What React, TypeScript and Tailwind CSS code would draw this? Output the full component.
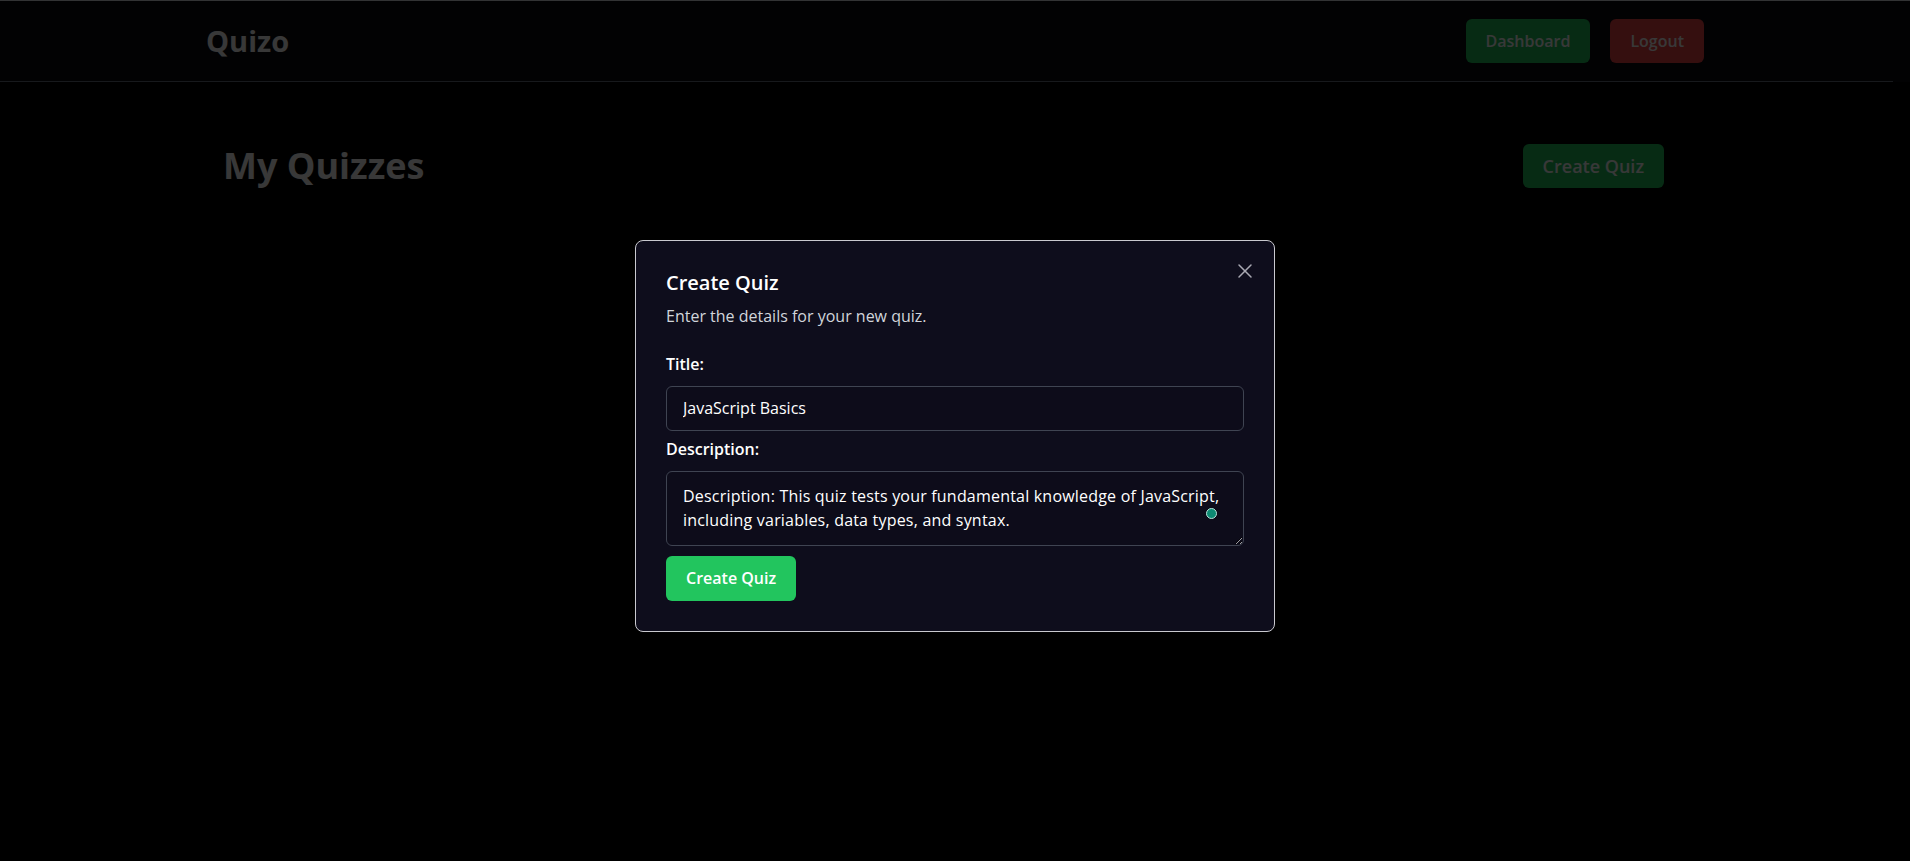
import { useEffect, useRef } from 'react'
import { X } from 'lucide-react'

const description =
  'Description: This quiz tests your fundamental knowledge of JavaScript, including variables, data types, and syntax.'

export default function App() {
  const descRef = useRef<HTMLTextAreaElement>(null)

  // put the caret at the end of the description, like the user just typed it
  useEffect(() => {
    const el = descRef.current
    if (el) {
      el.focus()
      el.setSelectionRange(el.value.length, el.value.length)
    }
  }, [])

  return (
    <div className="min-h-screen bg-black font-['Segoe_UI','Open_Sans',sans-serif] text-white">
      {/* Page underneath the dialog */}
      <div className="h-px w-full bg-[#e5e7eb]" />
      <nav className="bg-[#0a0a0f]">
        <div className="mx-auto flex h-20 w-[1498px] items-center justify-between">
          <span className="text-[29px] font-bold">Quizo</span>
          <div className="flex items-center gap-5">
            <button className="h-11 rounded-md bg-[#22c55e] px-5 text-base font-semibold">
              Dashboard
            </button>
            <button className="h-11 rounded-md bg-[#ef4444] px-5 text-base font-semibold">
              Logout
            </button>
          </div>
        </div>
        <div className="mr-[17px] h-px bg-[#6b7280]" />
      </nav>

      <main className="pl-[223px] pr-[246px] pt-[62px]">
        <div className="flex items-center justify-between">
          <h1 className="text-4xl font-bold">My Quizzes</h1>
          <button className="h-11 rounded-md bg-[#22c55e] px-5 text-lg font-semibold">
            Create Quiz
          </button>
        </div>
      </main>

      {/* Overlay + dialog */}
      <div className="fixed inset-0 flex items-center justify-center bg-black/[0.78] pt-[10px]">
        <div className="relative w-[640px] rounded-lg border border-[#c9c9cf] bg-[#0e0d1c] px-[30px] pb-[30px] pt-8">
          <button className="absolute right-[17px] top-[18px] text-[#a9a9b3]">
            <X size={24} strokeWidth={1.5} />
          </button>

          <h2 className="text-xl font-semibold leading-none">Create Quiz</h2>
          <p className="mt-[11px] text-base leading-6 text-[#d1d5db]">
            Enter the details for your new quiz.
          </p>

          <label className="mt-6 block text-base font-semibold leading-6">Title:</label>
          <input
            defaultValue="JavaScript Basics"
            className="mt-2.5 block h-[45px] w-full rounded-md border border-[#3f4452] bg-[#0d0c1a] px-4 text-base text-white outline-none"
          />

          <label className="mt-1.5 block text-base font-semibold leading-6">Description:</label>
          <div className="relative mt-2.5">
            <textarea
              ref={descRef}
              rows={2}
              defaultValue={description}
              className="block w-full resize-y rounded-md border border-[#3f4452] bg-[#0d0c1a] pb-[13px] pl-4 pr-2 pt-3 text-base leading-6 tracking-[0.2px] text-white caret-white outline-none [color-scheme:dark]"
            />
            <span className="absolute bottom-[27px] right-[27px] h-[11px] w-[11px] rounded-full border border-[#b9e6dc] bg-[#0d8a73]" />
          </div>

          <button className="mt-2.5 h-[45px] rounded-md bg-[#22c55e] px-5 text-base font-semibold text-white">
            Create Quiz
          </button>
        </div>
      </div>
    </div>
  )
}
